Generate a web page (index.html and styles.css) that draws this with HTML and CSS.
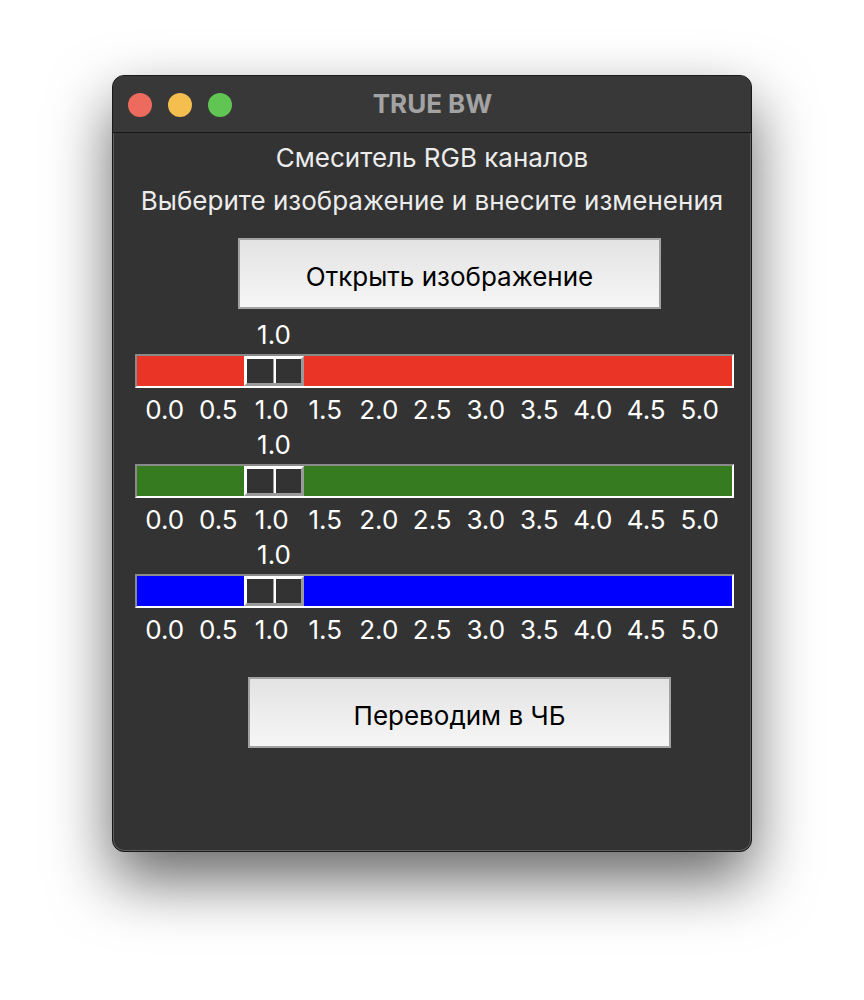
FILE: index.html
```html
<!DOCTYPE html>
<html lang="ru">
<head>
<meta charset="utf-8">
<title>TRUE BW</title>
<link rel="stylesheet" href="styles.css">
</head>
<body>
<div class="window">
  <div class="titlebar">
    <div class="lights">
      <span class="light red"></span>
      <span class="light yellow"></span>
      <span class="light green"></span>
    </div>
    <div class="title">TRUE BW</div>
  </div>
  <div class="content">
    <div class="heading">Смеситель RGB каналов</div>
    <div class="subheading">Выберите изображение и внесите изменения</div>
    <button class="btn btn-open">Открыть изображение</button>

    <div class="scale">
      <div class="value" style="margin-left:131px">1.0</div>
      <div class="trough trough-red">
        <div class="handle" style="left:107px"><span class="half"></span><span class="groove"></span><span class="half"></span></div>
      </div>
      <div class="ticks"><span>0.0</span><span>0.5</span><span>1.0</span><span>1.5</span><span>2.0</span><span>2.5</span><span>3.0</span><span>3.5</span><span>4.0</span><span>4.5</span><span>5.0</span></div>
    </div>

    <div class="scale">
      <div class="value" style="margin-left:131px">1.0</div>
      <div class="trough trough-green">
        <div class="handle" style="left:107px"><span class="half"></span><span class="groove"></span><span class="half"></span></div>
      </div>
      <div class="ticks"><span>0.0</span><span>0.5</span><span>1.0</span><span>1.5</span><span>2.0</span><span>2.5</span><span>3.0</span><span>3.5</span><span>4.0</span><span>4.5</span><span>5.0</span></div>
    </div>

    <div class="scale">
      <div class="value" style="margin-left:131px">1.0</div>
      <div class="trough trough-blue">
        <div class="handle" style="left:107px"><span class="half"></span><span class="groove"></span><span class="half"></span></div>
      </div>
      <div class="ticks"><span>0.0</span><span>0.5</span><span>1.0</span><span>1.5</span><span>2.0</span><span>2.5</span><span>3.0</span><span>3.5</span><span>4.0</span><span>4.5</span><span>5.0</span></div>
    </div>

    <button class="btn btn-convert">Переводим в ЧБ</button>
  </div>
</div>
</body>
</html>
```

FILE: styles.css
```css
html, body {
  margin: 0;
  padding: 0;
  background: #ffffff;
}

body {
  min-height: 1000px;
  overflow: hidden;
  font-family: Inter, "Liberation Sans", "Noto Sans", sans-serif;
}

.window {
  box-sizing: border-box;
  width: 640px;
  height: 777px;
  margin: 75px 0 0 112px;
  background: #333333;
  border: 1px solid #1a1a1a;
  border-radius: 12px;
  box-shadow: inset 0 0 0 1px #5c5c5c, 0 28px 62px rgba(0, 0, 0, 0.6);
  overflow: hidden;
}

.titlebar {
  height: 56px;
  background: #383838;
  border-bottom: 1px solid #161616;
  display: flex;
  align-items: center;
  position: relative;
}

.lights {
  display: flex;
  gap: 16px;
  padding-left: 15px;
  padding-top: 1px;
}

.light {
  width: 24px;
  height: 24px;
  border-radius: 50%;
  display: block;
}

.red { background: #ed6a5e; }
.yellow { background: #f5bf4f; }
.green { background: #61c554; }

.title {
  position: absolute;
  left: 0;
  right: 0;
  top: 0;
  height: 56px;
  line-height: 56px;
  text-align: center;
  font-weight: 700;
  font-size: 26px;
  color: #a3a3a3;
  padding-left: 1px;
}

.content {
  display: flex;
  flex-direction: column;
  align-items: flex-start;
  padding-top: 10px;
  color: #ececec;
  font-size: 26px;
}

.heading,
.subheading {
  align-self: stretch;
  text-align: center;
  line-height: 30px;
  height: 30px;
}

.subheading {
  margin-top: 13px;
}

.btn {
  box-sizing: border-box;
  width: 423px;
  height: 71px;
  border: 2px solid #a2a2a2;
  background: linear-gradient(#e3e3e3, #f6f6f6);
  color: #000000;
  font-family: Inter, "Liberation Sans", "Noto Sans", sans-serif;
  font-size: 26px;
  padding: 6px 0 0 0;
  margin: 0;
}

.btn-open {
  margin-top: 22px;
  margin-left: 125px;
}

.btn-convert {
  margin-top: 27px;
  margin-left: 135px;
}

.scale {
  display: flex;
  flex-direction: column;
  align-items: flex-start;
  align-self: stretch;
  padding-bottom: 5px;
}

.btn-open + .scale {
  margin-top: 11px;
}

.value {
  width: 60px;
  text-align: center;
  line-height: 30px;
  height: 30px;
  color: #ffffff;
}

.trough {
  box-sizing: border-box;
  position: relative;
  width: 599px;
  height: 34px;
  margin-top: 4px;
  margin-left: 22px;
  border-style: solid;
  border-width: 2px;
  border-color: #8a8a8a #ffffff #ffffff #8a8a8a;
}

.trough-red { background: #e93426; }
.trough-green { background: #367b20; }
.trough-blue { background: #0000ff; }

.handle {
  box-sizing: border-box;
  position: absolute;
  top: 0;
  width: 60px;
  height: 30px;
  background: #333333;
  border-style: solid;
  border-width: 3px;
  border-color: #ffffff #9a9a9a #9a9a9a #ffffff;
  display: flex;
}

.half {
  flex: 1;
}

.groove {
  width: 1px;
  border-right: 2px solid #ffffff;
  background: #9a9a9a;
}

.ticks {
  display: flex;
  margin-top: 7px;
  margin-left: 25px;
  color: #ffffff;
}

.ticks span {
  width: 53.5px;
  text-align: center;
  line-height: 30px;
  height: 30px;
  white-space: nowrap;
}
```
